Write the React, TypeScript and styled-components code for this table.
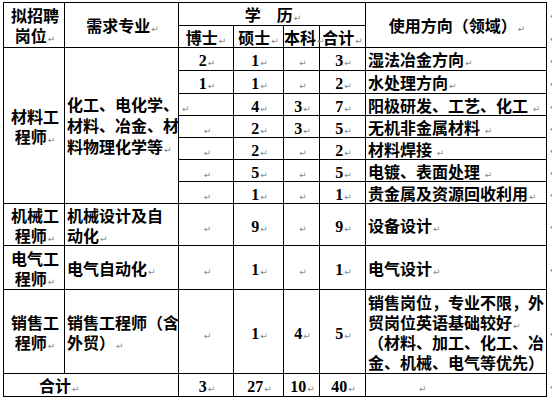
import React from "react";
import styled, { createGlobalStyle } from "styled-components";

const GlobalStyle = createGlobalStyle`
  html, body {
    margin: 0;
    padding: 0;
    background: #ffffff;
    overflow: hidden;
  }
`;

const Page = styled.div`
  width: 552px;
  height: 400px;
  box-sizing: border-box;
  padding: 2px 0 0 3px;
  background: #ffffff;
  overflow: hidden;
  font-family: "Noto Sans CJK SC", "Liberation Serif", sans-serif;
  color: #000;
`;

const Sheet = styled.table`
  border-collapse: collapse;
  table-layout: fixed;
  width: 549px;
`;

const Row = styled.tr<{ $h: number }>`
  height: ${(p) => p.$h}px;
`;

const Cell = styled.td<{ $align?: "left" | "center"; $pad?: number; $lh?: number }>`
  border: 1px solid #000;
  padding: 0 0 0 ${(p) => p.$pad ?? 2}px;
  text-align: ${(p) => p.$align ?? "center"};
  vertical-align: middle;
  font-size: 16px;
  line-height: ${(p) => p.$lh ?? 20}px;
  font-weight: 700;
  white-space: nowrap;
  overflow: visible;
`;

/* Word's end-of-row marker, outside the right border */
const RowEnd = styled.td`
  border: none;
  padding: 0 0 0 2px;
  vertical-align: middle;
  line-height: 0;
`;

const Num = styled.span`
  font-family: "Liberation Serif", "Times New Roman", serif;
  font-weight: 700;
  font-size: 16px;
  line-height: 1;
`;

const Mark = styled.span`
  font-family: "DejaVu Sans", sans-serif;
  font-weight: 400;
  font-size: 9px;
  line-height: 0;
  color: #8a8a8a;
  margin-left: 1px;
`;

const P = () => <Mark>↵</Mark>;

const End = () => (
  <RowEnd>
    <P />
  </RowEnd>
);

const N = ({ v }: { v?: number }) =>
  v === undefined ? (
    <P />
  ) : (
    <>
      <Num>{v}</Num>
      <P />
    </>
  );

type Line = {
  doc?: number;
  mas?: number;
  bach?: number;
  sum: number;
  use: string;
  docLeft?: boolean;
};

const materials: Line[] = [
  { doc: 2, mas: 1, sum: 3, use: "湿法冶金方向" },
  { doc: 1, mas: 1, sum: 2, use: "水处理方向" },
  { mas: 4, bach: 3, sum: 7, use: "阳极研发、工艺、化工 ", docLeft: true },
  { mas: 2, bach: 3, sum: 5, use: "无机非金属材料 " },
  { mas: 2, sum: 2, use: "材料焊接 " },
  { mas: 5, sum: 5, use: "电镀、表面处理 " },
  { mas: 1, sum: 1, use: "贵金属及资源回收利用" },
];

const matHeights = [23, 23, 22, 22, 22, 22, 22];

export default function App() {
  return (
    <Page>
      <GlobalStyle />
      <Sheet>
        <colgroup>
          <col style={{ width: 61 }} />
          <col style={{ width: 114 }} />
          <col style={{ width: 55 }} />
          <col style={{ width: 50 }} />
          <col style={{ width: 36 }} />
          <col style={{ width: 46 }} />
          <col style={{ width: 181 }} />
          <col style={{ width: 6 }} />
        </colgroup>
        <tbody>
          <Row $h={23}>
            <Cell rowSpan={2}>
              拟招聘
              <br />
              岗位
              <P />
            </Cell>
            <Cell rowSpan={2}>
              需求专业
              <P />
            </Cell>
            <Cell colSpan={4}>
              学　历
              <P />
            </Cell>
            <Cell rowSpan={2}>
              使用方向（领域）
              <P />
            </Cell>
            <End />
          </Row>
          <Row $h={22}>
            <Cell $pad={0}>
              博士
              <P />
            </Cell>
            <Cell $pad={0}>
              硕士
              <P />
            </Cell>
            <Cell $pad={0}>
              本科
              <P />
            </Cell>
            <Cell $pad={0}>
              合计
              <P />
            </Cell>
            <End />
          </Row>

          {materials.map((m, i) => (
            <Row $h={matHeights[i]} key={m.use}>
              {i === 0 && (
                <>
                  <Cell rowSpan={7}>
                    材料工
                    <br />
                    程师
                    <P />
                  </Cell>
                  <Cell rowSpan={7} $align="left" $lh={21}>
                    化工、电化学、
                    <br />
                    材料、冶金、材
                    <br />
                    料物理化学等
                    <P />
                  </Cell>
                </>
              )}
              <Cell $align={m.docLeft ? "left" : "center"}>
                <N v={m.doc} />
              </Cell>
              <Cell>
                <N v={m.mas} />
              </Cell>
              <Cell>
                <N v={m.bach} />
              </Cell>
              <Cell>
                <N v={m.sum} />
              </Cell>
              <Cell $align="left">
                {m.use}
                <P />
              </Cell>
              <End />
            </Row>
          ))}

          <Row $h={42}>
            <Cell>
              机械工
              <br />
              程师
              <P />
            </Cell>
            <Cell $align="left">
              机械设计及自
              <br />
              动化
              <P />
            </Cell>
            <Cell>
              <N />
            </Cell>
            <Cell>
              <N v={9} />
            </Cell>
            <Cell>
              <N />
            </Cell>
            <Cell>
              <N v={9} />
            </Cell>
            <Cell $align="left">
              设备设计
              <P />
            </Cell>
            <End />
          </Row>

          <Row $h={44}>
            <Cell>
              电气工
              <br />
              程师
              <P />
            </Cell>
            <Cell $align="left">
              电气自动化
              <P />
            </Cell>
            <Cell>
              <N />
            </Cell>
            <Cell>
              <N v={1} />
            </Cell>
            <Cell>
              <N />
            </Cell>
            <Cell>
              <N v={1} />
            </Cell>
            <Cell $align="left">
              电气设计
              <P />
            </Cell>
            <End />
          </Row>

          <Row $h={84}>
            <Cell>
              销售工
              <br />
              程师
              <P />
            </Cell>
            <Cell $align="left">
              销售工程师（含
              <br />
              外贸）
              <P />
            </Cell>
            <Cell>
              <N />
            </Cell>
            <Cell>
              <N v={1} />
            </Cell>
            <Cell>
              <N v={4} />
            </Cell>
            <Cell>
              <N v={5} />
            </Cell>
            <Cell $align="left">
              销售岗位，专业不限，外
              <br />
              贸岗位英语基础较好
              <P />
              <br />
              （材料、加工、化工、冶
              <br />
              金、机械、电气等优先）
            </Cell>
            <End />
          </Row>

          <Row $h={23}>
            <Cell colSpan={2} $align="left" $pad={35}>
              合计
              <P />
            </Cell>
            <Cell>
              <N v={3} />
            </Cell>
            <Cell>
              <N v={27} />
            </Cell>
            <Cell>
              <N v={10} />
            </Cell>
            <Cell>
              <N v={40} />
            </Cell>
            <Cell $align="left" $pad={52}>
              <P />
            </Cell>
            <End />
          </Row>
        </tbody>
      </Sheet>
    </Page>
  );
}
